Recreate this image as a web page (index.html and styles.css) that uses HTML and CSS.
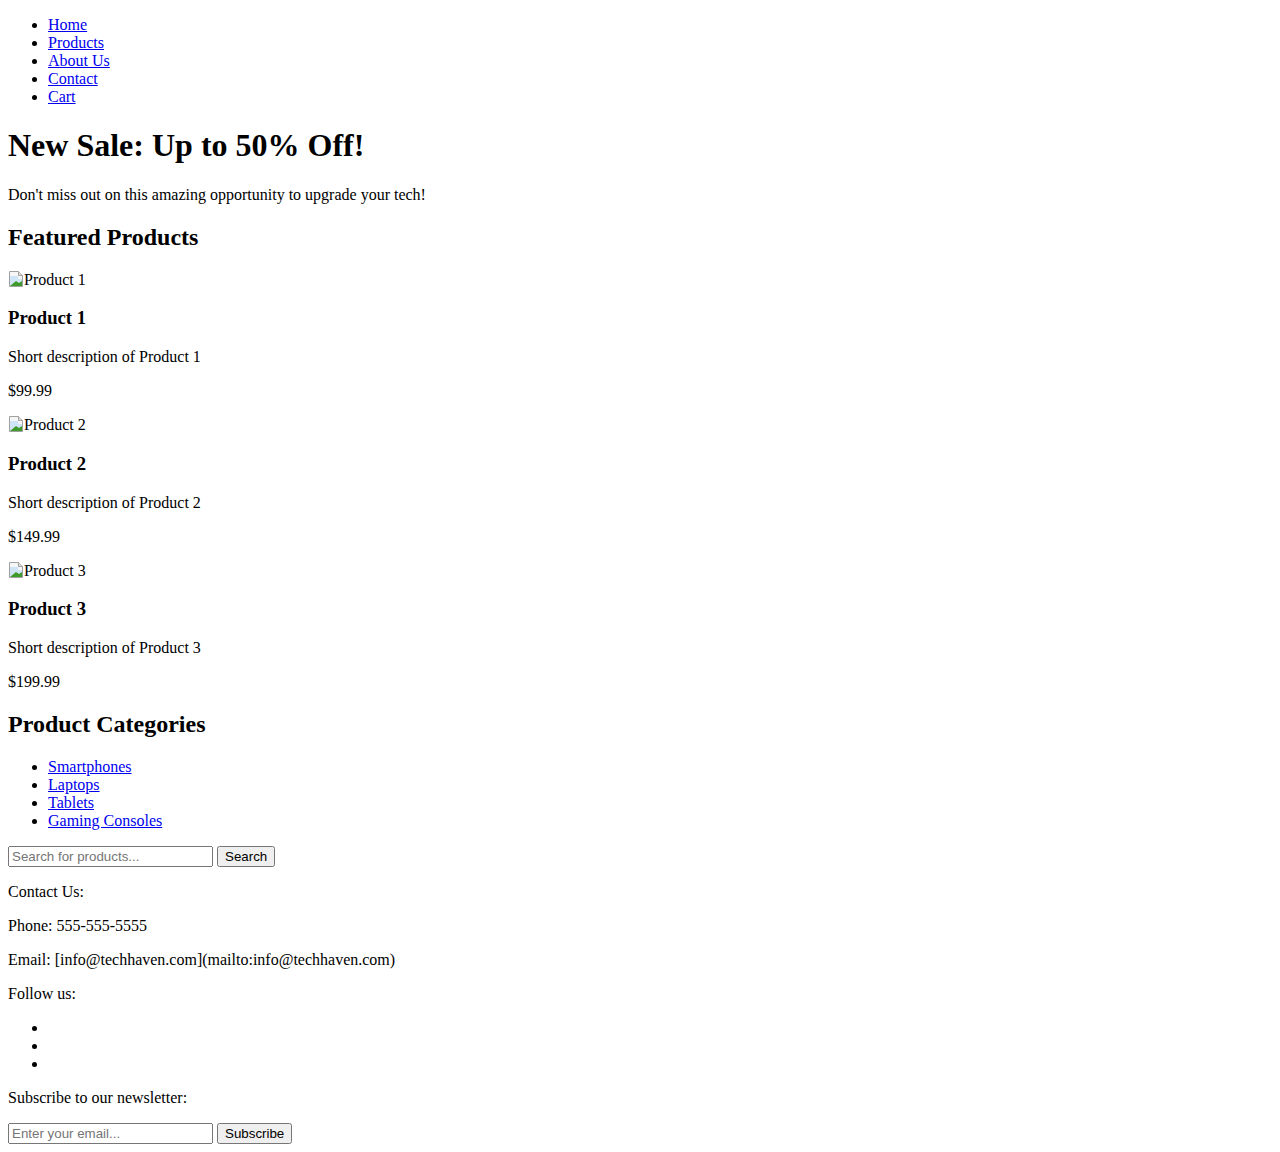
FILE: index.html
```
<!DOCTYPE html>
<html lang="en">
<head>
<meta charset="utf-8">
<title>Tech Haven</title>
<link rel="stylesheet" href="styles.css">
</head>
<body>
<nav>
  <ul class="nav-list">
    <li><a href="#">Home</a></li>
    <li><a href="#">Products</a></li>
    <li><a href="#">About Us</a></li>
    <li><a href="#">Contact</a></li>
    <li><a href="#">Cart</a></li>
  </ul>
</nav>
<h1>New Sale: Up to 50% Off!</h1>
<p>Don't miss out on this amazing opportunity to upgrade your tech!</p>
<h2>Featured Products</h2>
<div class="product">
  <div class="img"><svg class="broken" width="16" height="16" viewBox="0 0 16 16"><path d="M1.5 0.5h9l4 4v11h-13z" fill="#f6f6f6" stroke="#a0a0a0"/><path d="M10.5 0.5v4h4" fill="#dcdcdc" stroke="#a0a0a0"/><path d="M2 5h8v3h4v7H2z" fill="#cfe4f7"/><path d="M2 15l6-5 3 2 3-2v5z" fill="#3f9a2c"/></svg><span>Product 1</span></div>
  <h3>Product 1</h3>
  <p>Short description of Product 1</p>
  <p>$99.99</p>
</div>
<div class="product">
  <div class="img"><svg class="broken" width="16" height="16" viewBox="0 0 16 16"><path d="M1.5 0.5h9l4 4v11h-13z" fill="#f6f6f6" stroke="#a0a0a0"/><path d="M10.5 0.5v4h4" fill="#dcdcdc" stroke="#a0a0a0"/><path d="M2 5h8v3h4v7H2z" fill="#cfe4f7"/><path d="M2 15l6-5 3 2 3-2v5z" fill="#3f9a2c"/></svg><span>Product 2</span></div>
  <h3>Product 2</h3>
  <p>Short description of Product 2</p>
  <p>$149.99</p>
</div>
<div class="product">
  <div class="img"><svg class="broken" width="16" height="16" viewBox="0 0 16 16"><path d="M1.5 0.5h9l4 4v11h-13z" fill="#f6f6f6" stroke="#a0a0a0"/><path d="M10.5 0.5v4h4" fill="#dcdcdc" stroke="#a0a0a0"/><path d="M2 5h8v3h4v7H2z" fill="#cfe4f7"/><path d="M2 15l6-5 3 2 3-2v5z" fill="#3f9a2c"/></svg><span>Product 3</span></div>
  <h3>Product 3</h3>
  <p>Short description of Product 3</p>
  <p>$199.99</p>
</div>
<h2>Product Categories</h2>
<ul>
  <li><a href="#">Smartphones</a></li>
  <li><a href="#">Laptops</a></li>
  <li><a href="#">Tablets</a></li>
  <li><a href="#">Gaming Consoles</a></li>
</ul>
<form class="search">
  <input type="text" placeholder="Search for products...">
  <button type="button">Search</button>
</form>
<footer>
  <p>Contact Us:</p>
  <p>Phone: 555-555-5555</p>
  <p>Email: [info@techhaven.com](mailto:info@techhaven.com)</p>
  <p>Follow us:</p>
  <ul>
    <li><a href="#"></a></li>
    <li><a href="#"></a></li>
    <li><a href="#"></a></li>
  </ul>
  <p>Subscribe to our newsletter:</p>
  <form class="newsletter">
    <input type="email" placeholder="Enter your email...">
    <button type="button">Subscribe</button>
  </form>
</footer>
</body>
</html>
```
FILE: styles.css
```
body {
  margin: 0 8px 8px;
  font-family: "Liberation Serif", "Times New Roman", serif;
  font-size: 16px;
  color: #000;
  background: #fff;
}
a { color: #0000ee; }
.broken { vertical-align: top; }
input, button {
  font-family: "Liberation Sans", Arial, sans-serif;
  font-size: 13.3333px;
}
input {
  width: 197px;
  padding: 1px 2px;
}
form { margin: 0; }
```
